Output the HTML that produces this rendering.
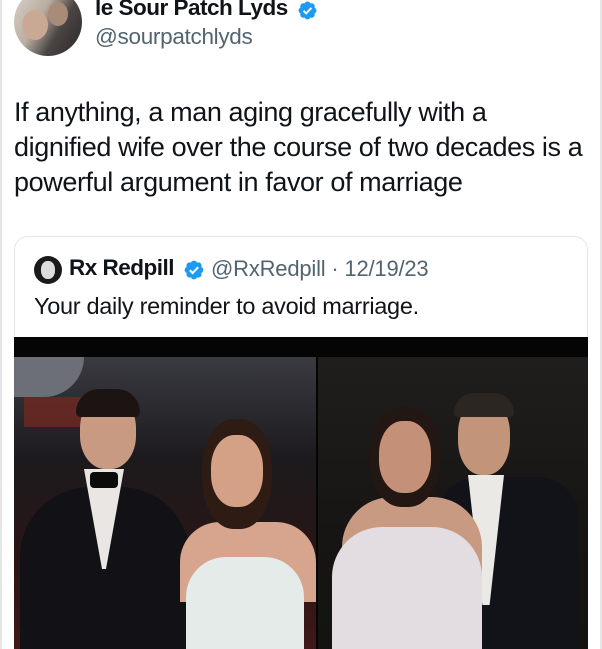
<!DOCTYPE html>
<html><head><style>
html,body{margin:0;padding:0;background:#fff;width:602px;height:649px;overflow:hidden;font-family:"Liberation Sans",Arial,sans-serif;color:#0f1419;position:relative}
.a{position:absolute;white-space:nowrap}
</style></head><body>
<div class="a" style="left:0;top:0;width:2px;height:649px;background:#e6e6e6"></div>
<div class="a" style="left:600px;top:0;width:2px;height:649px;background:#e6e6e6"></div>
<div class="a" style="left:14px;top:-12px;width:68px;height:68px;border-radius:50%;background:linear-gradient(120deg,#d9d4cc 0%,#b9ad9f 40%,#4a4543 65%,#2b2827 100%);overflow:hidden">
<div class="a" style="left:8px;top:22px;width:26px;height:30px;border-radius:50%;background:#c9a994"></div>
<div class="a" style="left:34px;top:14px;width:20px;height:24px;border-radius:50%;background:#a98c78"></div>
</div>
<div class="a" style="left:95px;top:-5px;font-size:22.5px;font-weight:bold;letter-spacing:-0.5px">le Sour Patch Lyds</div>
<svg class="a" style="left:297px;top:0px" width="21" height="21" viewBox="0 0 24 24"><path fill="#1d9bf0" d="M22.25 12c0-1.43-.88-2.67-2.19-3.34.46-1.39.2-2.9-.81-3.91s-2.52-1.27-3.91-.81c-.66-1.31-1.91-2.19-3.34-2.19s-2.67.88-3.33 2.19c-1.4-.46-2.91-.2-3.92.81s-1.26 2.52-.8 3.91C2.63 9.33 1.75 10.57 1.75 12s.88 2.67 2.19 3.34c-.46 1.39-.2 2.9.8 3.91s2.52 1.26 3.91.81c.67 1.31 1.91 2.19 3.34 2.19s2.68-.88 3.34-2.19c1.39.45 2.9.2 3.91-.81s1.27-2.52.81-3.91c1.31-.67 2.19-1.91 2.19-3.34z"/><path fill="none" stroke="#fff" stroke-width="2.2" d="M7.5 12.3l3 3 6-6.3"/></svg>
<div class="a" style="left:95px;top:24px;font-size:22.5px;color:#536471;letter-spacing:-0.3px">@sourpatchlyds</div>
<div class="a" style="left:14px;top:95px;font-size:27px;line-height:35px;letter-spacing:-0.4px">If anything, a man aging gracefully with a<br>dignified wife over the course of two decades is a<br>powerful argument in favor of marriage</div>
<div class="a" style="left:14px;top:236px;width:572px;height:440px;border:1px solid #e3e6e8;border-radius:14px"></div>
<div class="a" style="left:34px;top:256px;width:28px;height:28px;border-radius:50%;background:#1a1a1a"><div class="a" style="left:7px;top:5px;width:14px;height:18px;border-radius:45%;background:#ddd"></div></div>
<div class="a" style="left:69px;top:255px;font-size:22.5px;font-weight:bold;letter-spacing:-0.5px">Rx Redpill</div>
<svg class="a" style="left:183px;top:259px" width="22" height="22" viewBox="0 0 24 24"><path fill="#1d9bf0" d="M22.25 12c0-1.43-.88-2.67-2.19-3.34.46-1.39.2-2.9-.81-3.91s-2.52-1.27-3.91-.81c-.66-1.31-1.91-2.19-3.34-2.19s-2.67.88-3.33 2.19c-1.4-.46-2.91-.2-3.92.81s-1.26 2.52-.8 3.91C2.63 9.33 1.75 10.57 1.75 12s.88 2.670 2.190 3.340c-.46 1.39-.2 2.9.8 3.91s2.52 1.26 3.91.81c.67 1.31 1.91 2.19 3.34 2.19s2.68-.88 3.34-2.19c1.39.45 2.9.2 3.91-.81s1.27-2.52.81-3.91c1.31-.67 2.19-1.91 2.19-3.34z"/><path fill="none" stroke="#fff" stroke-width="2.2" d="M7.5 12.3l3 3 6-6.3"/></svg>
<div class="a" style="left:211px;top:256px;font-size:22px;color:#536471;letter-spacing:-0.2px">@RxRedpill · 12/19/23</div>
<div class="a" style="left:34px;top:293px;font-size:23.5px;letter-spacing:-0.3px">Your daily reminder to avoid marriage.</div>
<div class="a" style="left:14px;top:337px;width:574px;height:312px;background:#050505;overflow:hidden">
 <div class="a" style="left:0;top:20px;width:302px;height:292px;background:linear-gradient(180deg,#3a3a42 0%,#1c1a1d 35%,#2a1515 70%,#401818 100%)">
  <div class="a" style="left:0;top:0;width:70px;height:40px;background:#6d6f78;border-radius:0 0 40px 0"></div>
  <div class="a" style="left:10px;top:40px;width:60px;height:30px;background:#7a2820;opacity:.7"></div>
  <div class="a" style="left:6px;top:130px;width:170px;height:170px;border-radius:70px 70px 0 0;background:#121115"></div>
  <div class="a" style="left:70px;top:112px;width:40px;height:100px;background:#e9e6e3;clip-path:polygon(0 0,100% 0,55% 100%,45% 100%)"></div>
  <div class="a" style="left:76px;top:115px;width:28px;height:16px;background:#0b0b0b;border-radius:4px"></div>
  <div class="a" style="left:66px;top:38px;width:56px;height:74px;border-radius:45%;background:#c99a82"></div>
  <div class="a" style="left:62px;top:32px;width:64px;height:28px;border-radius:30px 30px 6px 6px;background:#1b1412"></div>
  <div class="a" style="left:166px;top:165px;width:136px;height:80px;border-radius:40px 40px 0 0;background:#d7a58e"></div>
  <div class="a" style="left:172px;top:200px;width:118px;height:100px;border-radius:40px 40px 0 0;background:#e4ebe8"></div>
  <div class="a" style="left:188px;top:62px;width:70px;height:110px;border-radius:45%;background:#2d1b14"></div>
  <div class="a" style="left:197px;top:78px;width:52px;height:72px;border-radius:45%;background:#d4a086"></div>
 </div>
 <div class="a" style="left:304px;top:20px;width:270px;height:292px;background:linear-gradient(180deg,#201e1c 0%,#161513 60%,#141312 100%)">
  <div class="a" style="left:120px;top:120px;width:140px;height:180px;border-radius:40px 40px 0 0;background:#121318"></div>
  <div class="a" style="left:150px;top:118px;width:36px;height:130px;background:#ebe9e6;clip-path:polygon(0 0,100% 0,60% 100%,40% 100%)"></div>
  <div class="a" style="left:140px;top:42px;width:52px;height:76px;border-radius:45%;background:#c29479"></div>
  <div class="a" style="left:136px;top:36px;width:60px;height:24px;border-radius:30px 30px 6px 6px;background:#2b2622"></div>
  <div class="a" style="left:24px;top:140px;width:140px;height:80px;border-radius:50px 50px 0 0;background:#c89a82"></div>
  <div class="a" style="left:14px;top:170px;width:150px;height:130px;border-radius:50px 50px 0 0;background:#e3dde2"></div>
  <div class="a" style="left:52px;top:50px;width:70px;height:100px;border-radius:45%;background:#231713"></div>
  <div class="a" style="left:61px;top:64px;width:52px;height:72px;border-radius:45%;background:#c49077"></div>
 </div>
</div>
</body></html>
